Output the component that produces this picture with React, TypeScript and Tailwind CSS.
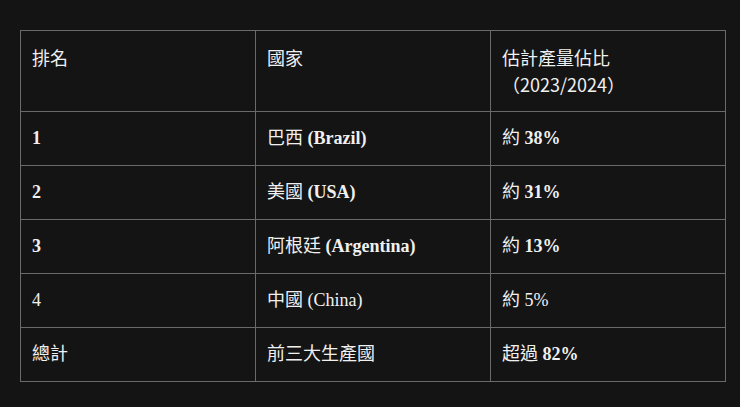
import React from "react";

const serif = "font-['Liberation_Serif','Noto_Sans_CJK_TC',serif]";

function Cell({ children }: { children: React.ReactNode }) {
  return (
    <td className="border border-[#6a6a6a] px-[11px] py-[13px] align-top leading-[27px]">
      {children}
    </td>
  );
}

const rows: { a: React.ReactNode; b: React.ReactNode; c: React.ReactNode }[] = [
  { a: <b>1</b>, b: <>巴西 <b>(Brazil)</b></>, c: <>約 <b>38%</b></> },
  { a: <b>2</b>, b: <>美國 <b>(USA)</b></>, c: <>約 <b>31%</b></> },
  { a: <b>3</b>, b: <>阿根廷 <b>(Argentina)</b></>, c: <>約 <b>13%</b></> },
  { a: <>4</>, b: <>中國 (China)</>, c: <>約 5%</> },
  { a: <>總計</>, b: <>前三大生產國</>, c: <>超過 <b>82%</b></> },
];

const th =
  "border border-[#6a6a6a] px-[11px] py-[13px] align-top text-left font-normal leading-[27px] font-['Noto_Sans_CJK_TC',sans-serif]";

export default function App() {
  return (
    <div className={`w-[740px] h-[407px] bg-[#141414] text-[#f0f0f0] pt-[30px] pl-[20px] ${serif}`}>
      <table className="w-[706px] border-collapse table-fixed text-[18px]">
        <thead>
          <tr>
            <th className={th}>排名</th>
            <th className={th}>國家</th>
            <th className={th}>
              估計產量佔比
              <br />
              （2023/2024）
            </th>
          </tr>
        </thead>
        <tbody>
          {rows.map((r, i) => (
            <tr key={i}>
              <Cell>{r.a}</Cell>
              <Cell>{r.b}</Cell>
              <Cell>{r.c}</Cell>
            </tr>
          ))}
        </tbody>
      </table>
    </div>
  );
}
